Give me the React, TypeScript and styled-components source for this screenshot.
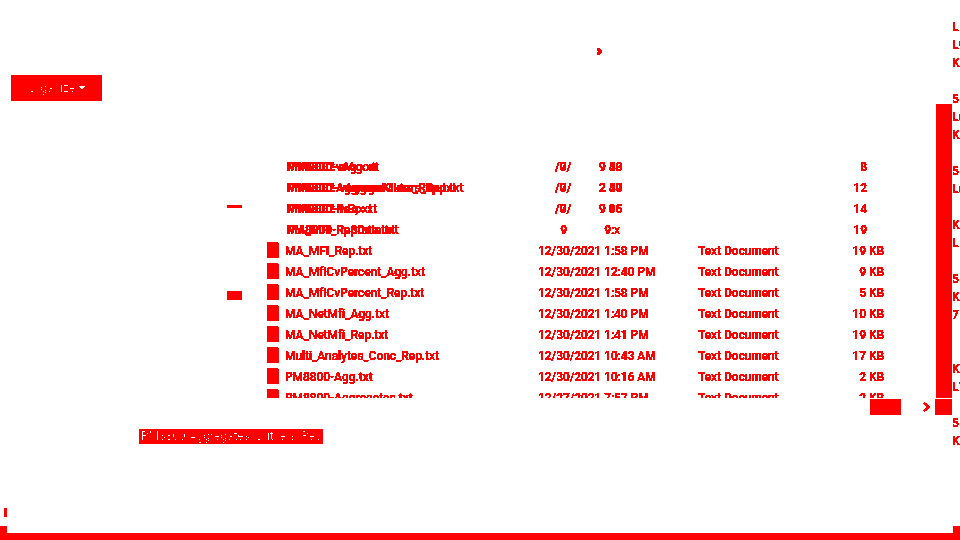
import React from 'react';
import styled, { createGlobalStyle } from 'styled-components';

const RED = '#ff0000';

const GlobalStyle = createGlobalStyle`
  html, body {
    margin: 0;
    padding: 0;
    background: #ffffff;
  }
`;

const FilterDefs = styled.svg`
  display: block;
  width: 0;
  height: 0;
`;

const Page = styled.div`
  width: 960px;
  height: 540px;
  display: flex;
  flex-direction: column;
  overflow: hidden;
  background: #ffffff;
  color: ${RED};
  font-family: Roboto, "Noto Sans", sans-serif;
  font-size: 12px;
  font-weight: 500;
  letter-spacing: -0.06px;
  filter: url(#crisp);
`;

const Frame = styled.div`
  flex: 1;
  min-height: 0;
  display: flex;
`;

const Main = styled.div`
  flex: 1;
  min-width: 0;
  display: flex;
  flex-direction: column;
`;

const BottomEdge = styled.div`
  height: 7px;
  background: ${RED};
`;

const EdgeColumn = styled.div`
  width: 7px;
  padding-top: 18px;
  display: flex;
  flex-direction: column;
  overflow: hidden;
  white-space: nowrap;
`;

const EdgeLine = styled.div`
  height: 18px;
  line-height: 18px;
  margin-left: -1px;
`;

const EdgeNub = styled.div`
  width: 7px;
  height: 7px;
  margin-top: auto;
  background: ${RED};
`;

const TopBar = styled.div`
  height: 75px;
  flex: none;
  padding: 48px 0 0 597px;
  box-sizing: border-box;
`;

const Toolbar = styled.div`
  height: 26px;
  flex: none;
  padding-left: 11px;
`;

const OrganizeButton = styled.button`
  width: 91px;
  height: 26px;
  padding: 0 16px 0 17px;
  border: 0;
  display: flex;
  align-items: center;
  justify-content: space-between;
  background: ${RED};
  color: rgba(255, 255, 255, 0.88);
  font: inherit;
  font-weight: 400;
`;

const Caret = styled.span`
  width: 0;
  height: 0;
  border-left: 4px solid transparent;
  border-right: 4px solid transparent;
  border-top: 4px solid #ffffff;
`;

const Body = styled.div`
  height: 294px;
  flex: none;
  margin-top: 3px;
  display: flex;
`;

const FileList = styled.div`
  width: 936px;
  box-sizing: border-box;
  padding-top: 53px;
  overflow: hidden;
`;

const Row = styled.div`
  height: 21px;
  line-height: 21px;
  padding-left: 227px;
  display: grid;
  grid-template-columns: 40px 18px 253px 160px 142px 44px;
  align-items: start;
  white-space: nowrap;
`;

const Marker = styled.div<{ $tall?: boolean }>`
  width: 15px;
  height: ${props => (props.$tall ? 9 : 3)}px;
  margin-top: ${props => (props.$tall ? 8 : 6)}px;
  background: ${RED};
`;

const FileIcon = styled.div`
  grid-column: 2;
  width: 12px;
  height: 16px;
  margin-top: 1px;
  background: ${RED};
  clip-path: polygon(0 0, 80% 0, 100% 12%, 100% 100%, 0 100%);
`;

const NameCell = styled.div`
  grid-column: 3;
`;

const Ghost = styled.div`
  display: grid;
  > span {
    grid-area: 1 / 1;
  }
`;

const GhostName = styled(Ghost)`
  grid-column: 3;
  padding-left: 2px;
`;

const DateCell = styled.div`
  grid-column: 4;
`;

const GhostDate = styled.div`
  grid-column: 4;
  padding-left: 17px;
  display: grid;
  grid-template-columns: 12px 21px;
  column-gap: 32px;
  text-align: right;
`;

const TypeCell = styled.div`
  grid-column: 5;
`;

const SizeCell = styled.div<{ $ghost?: boolean }>`
  grid-column: 6;
  text-align: right;
  padding-right: ${props => (props.$ghost ? 17 : 0)}px;
`;

const ScrollTrack = styled.div`
  width: 16px;
  background: ${RED};
`;

const HScrollRow = styled.div`
  height: 16px;
  flex: none;
  margin-top: 1px;
  padding-left: 870px;
  display: flex;
  align-items: center;
`;

const HThumb = styled.div`
  width: 31px;
  height: 16px;
  background: ${RED};
`;

const HArrow = styled.svg`
  width: 7px;
  height: 10px;
  margin-left: 22px;
`;

const HButton = styled.div`
  width: 17px;
  height: 16px;
  margin-left: 5px;
  background: ${RED};
`;

const FileNameRow = styled.div`
  flex: none;
  margin-top: 14px;
  padding-left: 139px;
`;

const FileNameInput = styled.div`
  width: 184px;
  height: 15px;
  line-height: 15px;
  padding-left: 2px;
  box-sizing: border-box;
  overflow: hidden;
  white-space: nowrap;
  background: ${RED};
  color: rgba(255, 255, 255, 0.88);
  font-weight: 400;
`;

const Corner = styled.div`
  margin-top: auto;
  height: 25px;
  flex: none;
  display: flex;
  flex-direction: column;
`;

const CornerTick = styled.div`
  width: 3px;
  height: 9px;
  margin-left: 4px;
  background: ${RED};
`;

const CornerNub = styled.div`
  width: 7px;
  height: 7px;
  margin-top: 9px;
  background: ${RED};
`;

interface GhostRow {
  names: string[];
  left: string[];
  right: string[];
  size: string;
  marker?: boolean;
}

const ghostRows: GhostRow[] = [
  { names: ['PM8800-vAg.x xt', 'MM8802-wAg.xt'], left: ['/0/', '7/'], right: ['9 58', '9 40'], size: '8' },
  { names: ['PM8800-AggregatOuters_Rep.txt', 'MM8802-vAggresMiers_Rep.txt'], left: ['/0/', '7/'], right: ['2 40', '2 57'], size: '12' },
  { names: ['PM8800-Re.x xt', 'MM8802-wR;x xt'], left: ['/0/', '7/'], right: ['9 05', '9 16'], size: '14', marker: true },
  { names: ['MA_MFI_RepDate.txt', 'PM8800-RpState.txt'], left: ['9'], right: ['9:x'], size: '19' },
];

const files = [
  { name: 'MA_MFI_Rep.txt', date: '12/30/2021 1:58 PM', size: '19 KB' },
  { name: 'MA_MfiCvPercent_Agg.txt', date: '12/30/2021 12:40 PM', size: '9 KB' },
  { name: 'MA_MfiCvPercent_Rep.txt', date: '12/30/2021 1:58 PM', size: '5 KB', marker: true },
  { name: 'MA_NetMfi_Agg.txt', date: '12/30/2021 1:40 PM', size: '10 KB' },
  { name: 'MA_NetMfi_Rep.txt', date: '12/30/2021 1:41 PM', size: '19 KB' },
  { name: 'Multi_Analytes_Conc_Rep.txt', date: '12/30/2021 10:43 AM', size: '17 KB' },
  { name: 'PM8800-Agg.txt', date: '12/30/2021 10:16 AM', size: '2 KB' },
  { name: 'PM8800-Aggregates.txt', date: '12/27/2021 7:57 PM', size: '2 KB' },
];

const edgeLines = ['L', 'L9', 'K2', '', '5', 'L6', 'K2', '', '5', 'L6', '', 'K9', 'L', '', '5', 'K', '  7', '', '', 'K7', 'L7', '', '5', 'K7'];

const App = () => (
  <>
    <GlobalStyle />
    <FilterDefs aria-hidden="true">
      <filter id="crisp" colorInterpolationFilters="sRGB" x="0" y="0" width="100%" height="100%">
        <feComponentTransfer>
          <feFuncG type="discrete" tableValues="0 0 0 0 0 0 1" />
          <feFuncB type="discrete" tableValues="0 0 0 0 0 0 1" />
        </feComponentTransfer>
      </filter>
    </FilterDefs>
    <Page>
      <Frame>
        <Main>
          <TopBar>
            <svg width="5" height="7" viewBox="0 0 5 7" style={{ display: 'block' }}>
              <path d="M0 0h2l3 3v1L2 7H0l1-3.500z" fill={RED} />
            </svg>
          </TopBar>
          <Toolbar>
            <OrganizeButton>
              Organize
              <Caret />
            </OrganizeButton>
          </Toolbar>
          <Body>
            <FileList>
              {ghostRows.map(row => (
                <Row key={row.names[0]}>
                  {row.marker && <Marker />}
                  <GhostName>
                    {row.names.map(n => <span key={n}>{n}</span>)}
                  </GhostName>
                  <GhostDate>
                    <Ghost>{row.left.map(t => <span key={t}>{t}</span>)}</Ghost>
                    <Ghost>{row.right.map(t => <span key={t}>{t}</span>)}</Ghost>
                  </GhostDate>
                  <SizeCell $ghost>{row.size}</SizeCell>
                </Row>
              ))}
              {files.map(file => (
                <Row key={file.name}>
                  {file.marker && <Marker $tall />}
                  <FileIcon />
                  <NameCell>{file.name}</NameCell>
                  <DateCell>{file.date}</DateCell>
                  <TypeCell>Text Document</TypeCell>
                  <SizeCell>{file.size}</SizeCell>
                </Row>
              ))}
            </FileList>
            <ScrollTrack />
          </Body>
          <HScrollRow>
            <HThumb />
            <HArrow viewBox="0 0 7 10">
              <path d="M1 1l4.500 4L1 9" fill="none" stroke={RED} strokeWidth="2" />
            </HArrow>
            <HButton />
          </HScrollRow>
          <FileNameRow>
            <FileNameInput>PM8800-Aggregates_Outliers_Rep</FileNameInput>
          </FileNameRow>
          <Corner>
            <CornerTick />
            <CornerNub />
          </Corner>
        </Main>
        <EdgeColumn>
          {edgeLines.map((line, i) => <EdgeLine key={i}>{line}</EdgeLine>)}
          <EdgeNub />
        </EdgeColumn>
      </Frame>
      <BottomEdge />
    </Page>
  </>
);

export default App;
